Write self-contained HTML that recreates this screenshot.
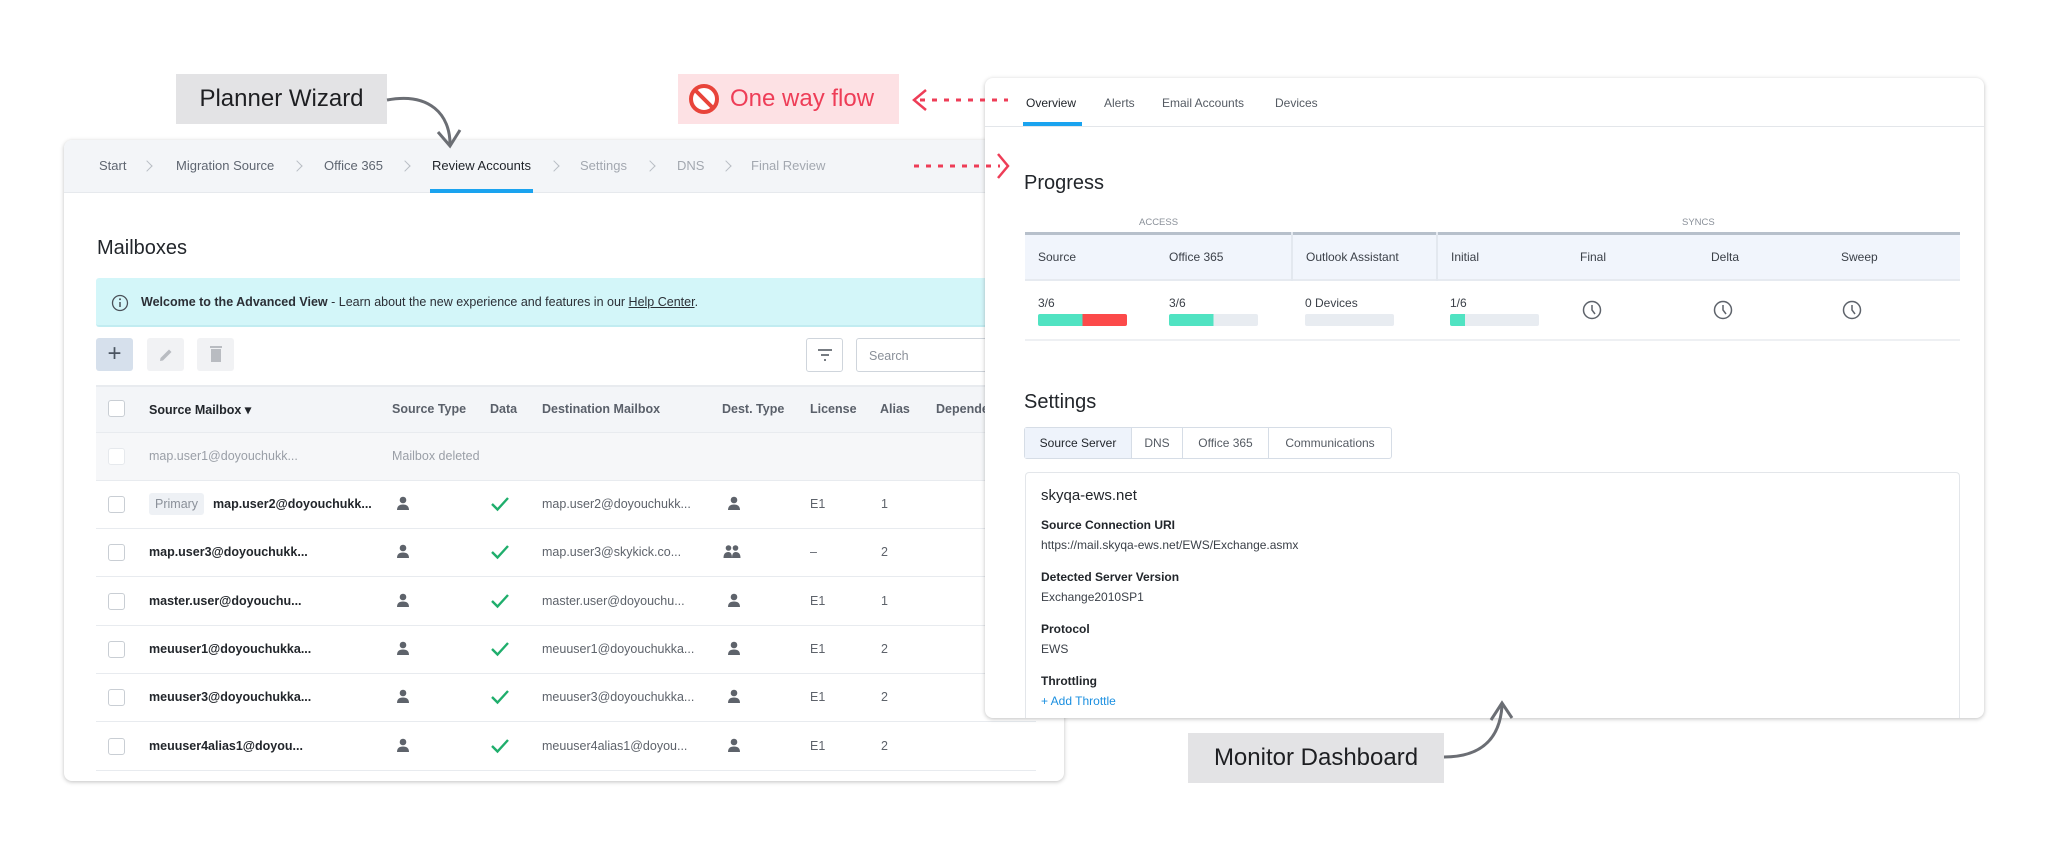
<!DOCTYPE html>
<html><head><meta charset="utf-8"><style>
*{margin:0;padding:0;box-sizing:border-box}
body{width:2048px;height:864px;background:#fff;position:relative;overflow:hidden;font-family:"Liberation Sans",sans-serif;color:#2b2f36}
.a{position:absolute;white-space:nowrap}
.lbl{background:#e3e3e5;font-size:24px;color:#1e1f22;display:flex;align-items:center;justify-content:center}
.card{position:absolute;background:#fff;border-radius:8px;box-shadow:0 1px 4px rgba(0,0,0,.25);overflow:hidden}
.bc{font-size:13px;color:#5f6671;top:158px}
.chev{position:absolute;top:162px;width:8px;height:8px;border-right:1.5px solid #b8bdc4;border-top:1.5px solid #b8bdc4;transform:rotate(45deg)}
.th{font-size:12.5px;color:#5a606a;font-weight:bold}
.cb{position:absolute;width:17px;height:17px;border:1.5px solid #c9ced4;border-radius:3px;background:#fff}
.row{position:absolute;left:96px;width:940px;height:48px;border-bottom:1px solid #e8ebef}
.t{font-size:12.5px}
.sm{font-size:12px;color:#3b4048}
.b{font-weight:bold}
</style></head><body>

<!-- Left card -->
<div class="card" style="left:64px;top:140px;width:1000px;height:641px">
 <div class="a" style="left:0;top:0;width:1000px;height:53px;background:#f3f5f8;border-bottom:1px solid #e6e9ed"></div>
</div>
<div class="a bc" style="left:99px">Start</div><div class="chev" style="left:143px"></div>
<div class="a bc" style="left:176px">Migration Source</div><div class="chev" style="left:293px"></div>
<div class="a bc" style="left:324px">Office 365</div><div class="chev" style="left:401px"></div>
<div class="a bc" style="left:432px;color:#1f2329">Review Accounts</div><div class="chev" style="left:550px"></div>
<div class="a" style="left:430px;top:189px;width:103px;height:4px;background:#1aa3ef"></div>
<div class="a bc" style="left:580px;color:#a3a8b0">Settings</div><div class="chev" style="left:646px"></div>
<div class="a bc" style="left:677px;color:#a3a8b0">DNS</div><div class="chev" style="left:722px"></div>
<div class="a bc" style="left:751px;color:#a3a8b0">Final Review</div>

<div class="a" style="left:97px;top:237px;font-size:20px;color:#22262b">Mailboxes</div>
<div class="a" style="left:96px;top:278px;width:900px;height:49px;background:#d3f6f9;border-bottom:2px solid #c1ecf1;border-radius:3px"></div>
<svg class="a" style="left:111px;top:294px" width="18" height="18"><circle cx="9" cy="9" r="7.5" fill="none" stroke="#4a5058" stroke-width="1.3"/><line x1="9" y1="8" x2="9" y2="13" stroke="#4a5058" stroke-width="1.5"/><circle cx="9" cy="5.3" r="1" fill="#4a5058"/></svg>
<div class="a" style="left:141px;top:295px;font-size:12.5px;color:#2b2f36"><b>Welcome to the Advanced View</b> - Learn about the new experience and features in our <u>Help Center</u>.</div>

<div class="a" style="left:96px;top:338px;width:37px;height:33px;background:#d6e0ec;border-radius:3px;font-size:24px;color:#4b5561;text-align:center;line-height:32px">+</div>
<div class="a" style="left:147px;top:338px;width:37px;height:33px;background:#f1f2f4;border-radius:3px"></div>
<svg class="a" style="left:157px;top:346px" width="18" height="18"><path d="M3 15 L3.5 12 L12 3.5 L14.5 6 L6 14.5 Z" fill="#b9bcc1"/></svg>
<div class="a" style="left:197px;top:338px;width:37px;height:33px;background:#f1f2f4;border-radius:3px"></div>
<svg class="a" style="left:208px;top:345px" width="16" height="19"><rect x="2" y="1" width="12" height="2" fill="#b9bcc1"/><rect x="3" y="4" width="10" height="13" fill="#b9bcc1"/></svg>
<div class="a" style="left:806px;top:338px;width:37px;height:34px;border:1px solid #cfd5dc;border-radius:3px"></div>
<svg class="a" style="left:816px;top:347px" width="18" height="16"><line x1="2" y1="3" x2="16" y2="3" stroke="#555b63" stroke-width="1.6"/><line x1="5" y1="8" x2="13" y2="8" stroke="#555b63" stroke-width="1.6"/><line x1="8" y1="13" x2="10" y2="13" stroke="#555b63" stroke-width="1.6"/></svg>
<div class="a" style="left:856px;top:338px;width:140px;height:34px;border:1px solid #cfd5dc;border-radius:3px;font-size:12.5px;color:#8a9099;padding:10px 12px">Search</div>

<div class="a" style="left:96px;top:385px;width:940px;height:48px;background:#f3f5f8;border-top:2px solid #e8ebef;border-bottom:1px solid #e8ebef"></div>
<div class="cb" style="left:108px;top:400px"></div>
<div class="a th" style="left:149px;top:402px;color:#22262b">Source Mailbox ▾</div>
<div class="a th" style="left:392px;top:402px">Source Type</div>
<div class="a th" style="left:490px;top:402px">Data</div>
<div class="a th" style="left:542px;top:402px">Destination Mailbox</div>
<div class="a th" style="left:722px;top:402px">Dest. Type</div>
<div class="a th" style="left:810px;top:402px">License</div>
<div class="a th" style="left:880px;top:402px">Alias</div>
<div class="a th" style="left:936px;top:402px">Depende</div>

<div class="row" style="top:433px;background:#f6f7f9"></div>
<div class="cb" style="left:108px;top:448px;border-color:#e6e9ed"></div>
<div class="a t" style="left:149px;top:449px;color:#9a9fa7">map.user1@doyouchukk...</div>
<div class="a t" style="left:392px;top:449px;color:#9a9fa7">Mailbox deleted</div>

<div id="rows"></div>
<script>
var d=[["map.user2@doyouchukk...","map.user2@doyouchukk...","E1","1",1,0],
["map.user3@doyouchukk...","map.user3@skykick.co...","–","2",0,1],
["master.user@doyouchu...","master.user@doyouchu...","E1","1",0,0],
["meuuser1@doyouchukka...","meuuser1@doyouchukka...","E1","2",0,0],
["meuuser3@doyouchukka...","meuuser3@doyouchukka...","E1","2",0,0],
["meuuser4alias1@doyou...","meuuser4alias1@doyou...","E1","2",0,0]];
var person='<svg width="14" height="15"><circle cx="7" cy="4" r="3.3" fill="#5e636b"/><path d="M1 14 Q1 8.5 7 8.5 Q13 8.5 13 14Z" fill="#5e636b"/></svg>';
var group='<svg width="18" height="15"><circle cx="5.5" cy="4" r="2.8" fill="#5e636b"/><circle cx="12.5" cy="4" r="2.8" fill="#5e636b"/><path d="M0.5 14 Q0.5 8 5.5 8 Q9 8 9 14Z M9 14 Q9 8 12.5 8 Q17.5 8 17.5 14Z" fill="#5e636b"/></svg>';
var check='<svg width="20" height="16"><path d="M2 8 L7.5 13.5 L18 2" fill="none" stroke="#1fae6c" stroke-width="2.4"/></svg>';
var h='';
for(var i=0;i<d.length;i++){var y=481+i*48.3;var c=y+16;var r=d[i];
h+='<div class="row" style="top:'+y+'px"></div><div class="cb" style="left:108px;top:'+(y+15)+'px"></div>';
var x=149;if(r[4]){h+='<div class="a" style="left:149px;top:'+(y+12)+'px;background:#eef1f5;color:#8a9099;font-size:12.5px;padding:4px 6px;border-radius:3px">Primary</div>';x=213;}
h+='<div class="a t b" style="left:'+x+'px;top:'+c+'px;color:#22262b;font-weight:bold">'+r[0]+'</div>';
h+='<div class="a" style="left:396px;top:'+(c-1)+'px">'+person+'</div>';
h+='<div class="a" style="left:490px;top:'+(c-1)+'px">'+check+'</div>';
h+='<div class="a t" style="left:542px;top:'+c+'px;color:#5e636b">'+r[1]+'</div>';
h+='<div class="a" style="left:'+(r[5]?723:727)+'px;top:'+(c-1)+'px">'+(r[5]?group:person)+'</div>';
h+='<div class="a t" style="left:810px;top:'+c+'px;color:#5e636b">'+r[2]+'</div>';
h+='<div class="a t" style="left:881px;top:'+c+'px;color:#5e636b">'+r[3]+'</div>';}
document.getElementById('rows').innerHTML=h;
</script>

<!-- Right card -->
<div class="card" style="left:985px;top:78px;width:999px;height:640px">
 <div class="a" style="left:0;top:48px;width:999px;height:1px;background:#e3e6ea"></div>
</div>
<div class="a sm" style="left:1026px;top:96px;color:#1f2329">Overview</div>
<div class="a sm" style="left:1104px;top:96px;color:#555b63">Alerts</div>
<div class="a sm" style="left:1162px;top:96px;color:#555b63">Email Accounts</div>
<div class="a sm" style="left:1275px;top:96px;color:#555b63">Devices</div>
<div class="a" style="left:1023px;top:122px;width:59px;height:4px;background:#1aa3ef"></div>

<div class="a" style="left:1024px;top:172px;font-size:20px;color:#22262b">Progress</div>
<div class="a" style="left:1139px;top:217px;font-size:9.5px;color:#8a9099">ACCESS</div>
<div class="a" style="left:1682px;top:217px;font-size:9.5px;color:#8a9099">SYNCS</div>
<div class="a" style="left:1025px;top:232px;width:935px;height:49px;background:#f1f5fc;border-top:3px solid #b7c0cb;border-bottom:2px solid #e6eaf0"></div>
<div class="a" style="left:1291px;top:232px;width:2px;height:49px;background:#e3e8ef"></div>
<div class="a" style="left:1436px;top:232px;width:2px;height:49px;background:#e3e8ef"></div>
<div class="a sm" style="left:1038px;top:250px">Source</div>
<div class="a sm" style="left:1169px;top:250px">Office 365</div>
<div class="a sm" style="left:1306px;top:250px">Outlook Assistant</div>
<div class="a sm" style="left:1451px;top:250px">Initial</div>
<div class="a sm" style="left:1580px;top:250px">Final</div>
<div class="a sm" style="left:1711px;top:250px">Delta</div>
<div class="a sm" style="left:1841px;top:250px">Sweep</div>

<div class="a sm" style="left:1038px;top:296px">3/6</div>
<div class="a sm" style="left:1169px;top:296px">3/6</div>
<div class="a sm" style="left:1305px;top:296px">0 Devices</div>
<div class="a sm" style="left:1450px;top:296px">1/6</div>
<div class="a" style="left:1038px;top:314px;width:89px;height:12px;border-radius:2px;background:linear-gradient(90deg,#50e3c2 50%,#fc4a4a 50%)"></div>
<div class="a" style="left:1169px;top:314px;width:89px;height:12px;border-radius:2px;background:linear-gradient(90deg,#50e3c2 50%,#e8ecf1 50%)"></div>
<div class="a" style="left:1305px;top:314px;width:89px;height:12px;border-radius:2px;background:#e8ecf1"></div>
<div class="a" style="left:1450px;top:314px;width:89px;height:12px;border-radius:2px;background:linear-gradient(90deg,#50e3c2 17%,#e8ecf1 17%)"></div>
<svg class="a" style="left:1582px;top:300px" width="300" height="22">
<g fill="none" stroke="#5e636b" stroke-width="1.5"><circle cx="10" cy="10" r="8.5"/><path d="M10 5 V10 L13 14"/><circle cx="141" cy="10" r="8.5"/><path d="M141 5 V10 L144 14"/><circle cx="270" cy="10" r="8.5"/><path d="M270 5 V10 L273 14"/></g></svg>
<div class="a" style="left:1025px;top:339px;width:935px;height:2px;background:#eef0f3"></div>

<div class="a" style="left:1024px;top:391px;font-size:20px;color:#22262b">Settings</div>
<div class="a" style="left:1024px;top:427px;width:368px;height:32px;border:1px solid #d6dde6;border-radius:3px;display:flex;font-size:12px;color:#555b63">
 <div style="width:107px;background:#eef3fb;color:#1f2329;text-align:center;line-height:30px;border-right:1px solid #d6dde6">Source Server</div>
 <div style="width:51px;text-align:center;line-height:30px;border-right:1px solid #d6dde6">DNS</div>
 <div style="width:86px;text-align:center;line-height:30px;border-right:1px solid #d6dde6">Office 365</div>
 <div style="flex:1;text-align:center;line-height:30px">Communications</div>
</div>
<div class="a" style="left:1025px;top:472px;width:935px;height:246px;border:1px solid #e3e6ea;border-bottom:none;border-radius:4px 4px 0 0"></div>
<div class="a" style="left:1041px;top:487px;font-size:15px;color:#22262b">skyqa-ews.net</div>
<div class="a sm b" style="left:1041px;top:518px;color:#22262b">Source Connection URI</div>
<div class="a sm" style="left:1041px;top:538px">https://mail.skyqa-ews.net/EWS/Exchange.asmx</div>
<div class="a sm b" style="left:1041px;top:570px;color:#22262b">Detected Server Version</div>
<div class="a sm" style="left:1041px;top:590px">Exchange2010SP1</div>
<div class="a sm b" style="left:1041px;top:622px;color:#22262b">Protocol</div>
<div class="a sm" style="left:1041px;top:642px">EWS</div>
<div class="a sm b" style="left:1041px;top:674px;color:#22262b">Throttling</div>
<div class="a sm" style="left:1041px;top:694px;color:#1a8fe0">+ Add Throttle</div>

<!-- Labels & arrows on top -->
<div class="a lbl" style="left:176px;top:74px;width:211px;height:50px">Planner Wizard</div>
<div class="a" style="left:678px;top:74px;width:221px;height:50px;background:#fde1e4;color:#ee3d57;font-size:24px;display:flex;align-items:center;padding-left:10px">
<svg width="32" height="32" viewBox="0 0 32 32" style="margin-right:10px"><circle cx="16" cy="16" r="13" fill="#fff" stroke="#e8443a" stroke-width="4"/><line x1="7" y1="7" x2="25" y2="25" stroke="#e8443a" stroke-width="4"/></svg>One way flow</div>
<div class="a lbl" style="left:1188px;top:733px;width:256px;height:50px">Monitor Dashboard</div>

<svg class="a" style="left:0;top:0" width="2048" height="864">
<path d="M387 100 C430 92 450 115 450 144" fill="none" stroke="#6b6e74" stroke-width="3"/>
<path d="M438 132 L450 146 L460 130" fill="none" stroke="#6b6e74" stroke-width="3"/>
<path d="M1444 757 C1485 757 1500 735 1502 706" fill="none" stroke="#6b6e74" stroke-width="3"/>
<path d="M1491 720 L1502 703 L1512 718" fill="none" stroke="#6b6e74" stroke-width="3"/>
<line x1="920" y1="100" x2="1008" y2="100" stroke="#ee3d57" stroke-width="3" stroke-dasharray="5 7"/>
<path d="M926 90 L914 100 L926 110" fill="none" stroke="#ee3d57" stroke-width="2.5"/>
<line x1="914" y1="166" x2="1000" y2="166" stroke="#ee3d57" stroke-width="3" stroke-dasharray="5 7"/>
<path d="M998 154 L1008 166 L998 178" fill="none" stroke="#ee3d57" stroke-width="2.5"/>
</svg>
</body></html>
